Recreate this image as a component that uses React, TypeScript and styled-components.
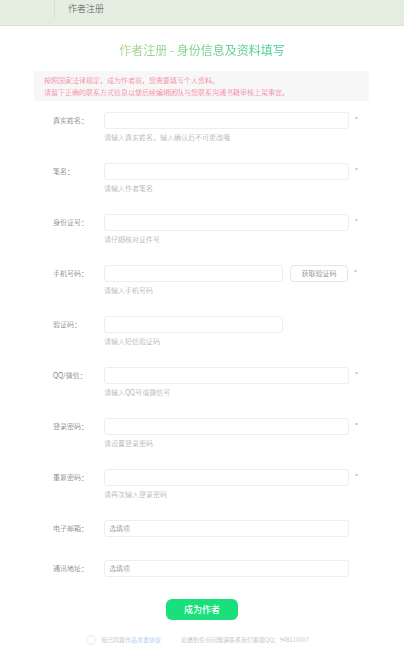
import React from "react";
import styled, { createGlobalStyle } from "styled-components";

const Global = createGlobalStyle`
  html, body { margin: 0; padding: 0; background: #fff; }
  body { font-family: "Noto Sans CJK SC", "Liberation Sans", sans-serif; font-weight: 300; }
  * { box-sizing: border-box; }
`;

const Page = styled.div`
  width: 404px;
  min-height: 660px;
  background: #fff;
  display: flex;
  flex-direction: column;
`;

const Header = styled.header`
  height: 26px;
  background: #e3eee0;
  border-bottom: 1px solid #d6e0d3;
  display: flex;
  align-items: flex-start;
  padding-left: 54px;
`;

const HeaderDivider = styled.div`
  width: 1px;
  height: 18px;
  background: #cfe0e4;
`;

const HeaderTitle = styled.div`
  margin-left: 13px;
  margin-top: 3px;
  font-size: 9px;
  line-height: 12px;
  color: #555;
`;

const Title = styled.h1`
  margin: 16px 0 0;
  text-align: center;
  font-size: 12px;
  line-height: 16px;
  font-weight: 400;
  display: flex;
  justify-content: center;
`;

const GradText = styled.span`
  background: linear-gradient(90deg, #b0d48a 0%, #70cf8c 50%, #3ccd90 100%);
  -webkit-background-clip: text;
  background-clip: text;
  color: transparent;
`;

const Notice = styled.div`
  margin: 13px 35px 0 34px;
  background: #f7f7f7;
  border-radius: 3px;
  padding: 3px 10px 3px;
  font-size: 7px;
  line-height: 12px;
  color: #f5628a;
`;

const Form = styled.div`
  margin-top: 11px;
  display: flex;
  flex-direction: column;
`;

const Row = styled.div<{ $pitch: number }>`
  display: grid;
  grid-template-columns: 51px auto 1fr;
  padding-left: 53px;
  height: ${(p) => p.$pitch}px;
`;

const Label = styled.div`
  font-size: 7px;
  line-height: 17px;
  color: #555;
  white-space: nowrap;
`;

const Field = styled.div`
  display: flex;
  flex-direction: column;
`;

const Line = styled.div`
  display: flex;
  align-items: center;
`;

const Input = styled.div<{ $w: number }>`
  width: ${(p) => p.$w}px;
  height: 17px;
  border: 1px solid #eeeeee;
  border-radius: 3px;
  background: #fff;
  font-size: 7px;
  line-height: 15px;
  padding-left: 4px;
  color: #777;
`;

const CodeButton = styled.div`
  margin-left: 7px;
  width: 58px;
  height: 17px;
  border: 1px solid #e6e6e6;
  border-radius: 4px;
  font-size: 7px;
  line-height: 15px;
  text-align: center;
  color: #555;
`;

const Star = styled.span`
  margin-left: 6px;
  font-size: 7px;
  color: #f5628a;
  line-height: 17px;
`;

const Hint = styled.div`
  margin-top: 2px;
  font-size: 7px;
  line-height: 12px;
  color: #999;
`;

const Submit = styled.div`
  align-self: center;
  margin-top: 22px;
  width: 72px;
  height: 21px;
  border-radius: 6px;
  background: #19e07a;
  color: #fff;
  font-size: 9px;
  line-height: 21px;
  text-align: center;
  font-weight: 500;
`;

const Footer = styled.div`
  margin-top: 15px;
  display: flex;
  align-items: center;
  padding-left: 86px;
  font-size: 6px;
  line-height: 10px;
  color: #aaa;
`;

const Check = styled.span`
  width: 10px;
  height: 10px;
  border-radius: 50%;
  border: 1px solid #ececec;
  margin-right: 5px;
`;

const Link = styled.span`
  color: #86aee6;
`;

const Contact = styled.span`
  margin-left: 20px;
`;

type F = { label: string; hint?: string; star?: boolean; width?: number; code?: boolean; ph?: string };

const fields: F[] = [
  { label: "真实姓名：", hint: "请输入真实姓名，输入确认后不可更改哦", star: true },
  { label: "笔名：", hint: "请输入作者笔名", star: true },
  { label: "身份证号：", hint: "请仔细核对证件号", star: true },
  { label: "手机号码：", hint: "请输入手机号码", star: true, width: 179, code: true },
  { label: "验证码：", hint: "请输入短信验证码", width: 179 },
  { label: "QQ/微信：", hint: "请输入QQ号或微信号", star: true },
  { label: "登录密码：", hint: "请设置登录密码", star: true },
  { label: "重复密码：", hint: "请再次输入登录密码", star: true },
  { label: "电子邮箱：", ph: "选填项" },
  { label: "通讯地址：", ph: "选填项" },
];

export default function App() {
  return (
    <Page>
      <Global />
      <Header>
        <HeaderDivider />
        <HeaderTitle>作者注册</HeaderTitle>
      </Header>
      <Title>
        <GradText>作者注册 - 身份信息及资料填写</GradText>
      </Title>
      <Notice>
        <div>按照国家法律规定，成为作者前，您需要填写个人资料。</div>
        <div>请留下正确的联系方式信息以便后续编辑团队与您联系沟通书籍审核上架事宜。</div>
      </Notice>
      <Form>
        {fields.map((f, i) => (
          <Row key={i} $pitch={i === fields.length - 1 ? 17 : f.hint ? 51 : 40}>
            <Label>{f.label}</Label>
            <Field>
              <Line>
                <Input $w={f.width ?? 245}>{f.ph}</Input>
                {f.code && <CodeButton>获取验证码</CodeButton>}
                {f.star && <Star>*</Star>}
              </Line>
              {f.hint && <Hint>{f.hint}</Hint>}
            </Field>
          </Row>
        ))}
        <Submit>成为作者</Submit>
      </Form>
      <Footer>
        <Check />
        <span>
          我已同意<Link>作品发表协议</Link>
        </span>
        <Contact>如遇到任何问题请联系我们客服QQ：948114007</Contact>
      </Footer>
    </Page>
  );
}
